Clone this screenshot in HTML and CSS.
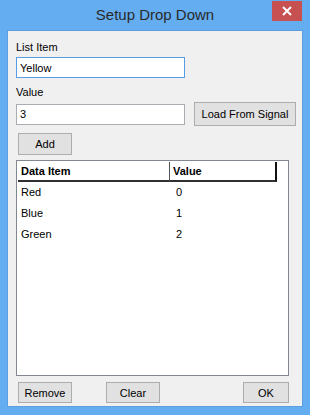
FILE: index.html
```html
<!DOCTYPE html>
<html lang="en">
  <head>
    <meta charset="utf-8" />
    <link rel="stylesheet" href="styles.css">
  </head>

  <body>
    <div class="window">
      <div class="titlebar">
        <span></span>
        <span class="title">Setup Drop Down</span>
        <button class="close">
          <svg width="10" height="10" viewBox="0 0 10 10">
            <path d="M1 1 L9 9 M9 1 L1 9" stroke="#fff" stroke-width="2" />
          </svg>
        </button>
      </div>

      <div class="client">
        <div class="label first">List Item</div>
        <input class="field focused" type="text" value="Yellow" />

        <div class="label">Value</div>
        <div class="value-row">
          <input class="field" type="text" value="3" />
          <button class="btn load">Load From Signal</button>
        </div>

        <button class="btn add">Add</button>

        <div class="listview">
          <div class="head">
            <div class="hcell col1">Data Item</div>
            <div class="hcell col2">Value</div>
          </div>
          <div class="row"><span class="col1">Red</span><span class="col2">0</span></div>
          <div class="row"><span class="col1">Blue</span><span class="col2">1</span></div>
          <div class="row"><span class="col1">Green</span><span class="col2">2</span></div>
        </div>

        <div class="bottom">
          <button class="btn small">Remove</button>
          <button class="btn small clear">Clear</button>
          <button class="btn small ok">OK</button>
        </div>
      </div>
    </div>
  </body>
</html>
```

FILE: styles.css
```css
body {
  margin: 0;
  font-family: "Liberation Sans", Arial, sans-serif;
  font-size: 11px;
  color: #000;
}

.window {
  width: 310px;
  height: 415px;
  background: #64adf1;
  box-sizing: border-box;
  padding: 0 7px 8px 7px;
  display: flex;
  flex-direction: column;
}

.titlebar {
  height: 30px;
  display: grid;
  grid-template-columns: 1fr auto 1fr;
}

.title {
  font-size: 15px;
  color: #2a2a2a;
  line-height: 30px;
}

.close {
  justify-self: end;
  align-self: start;
  width: 30px;
  height: 20px;
  margin: 1px 1px 0 0;
  border: none;
  padding: 0;
  background: #c75050;
  display: flex;
  align-items: center;
  justify-content: center;
}

.client {
  flex: 1;
  background: #f0f0f0;
  border: 1px solid #5b9fe0;
  padding: 0 6px 0 8px;
  display: flex;
  flex-direction: column;
  align-items: flex-start;
}

.label {
  line-height: 14px;
  margin-top: 7px;
  margin-bottom: 3px;
}

.label.first {
  margin-top: 9px;
  margin-bottom: 3px;
}

.field {
  width: 169px;
  height: 21px;
  box-sizing: border-box;
  border: 1px solid #abadb3;
  background: #fff;
  font-family: inherit;
  font-size: 11px;
  padding: 0 3px;
  margin: 0;
}

.field.focused {
  border-color: #569de5;
}

.value-row {
  width: 100%;
  display: flex;
  align-items: center;
  gap: 9px;
}

.btn {
  box-sizing: border-box;
  background: #e1e1e1;
  border: 1px solid #adadad;
  font-family: inherit;
  font-size: 11px;
  color: #000;
  padding: 0;
  margin: 0;
}

.load {
  width: 102px;
  height: 24px;
}

.add {
  width: 54px;
  height: 22px;
  margin: 7px 0 0 2px;
}

.listview {
  margin-top: 5px;
  width: 273px;
  height: 216px;
  box-sizing: border-box;
  background: #fff;
  border: 1px solid #828790;
  padding: 1px 0 0 1px;
}

.head {
  display: flex;
  height: 20px;
}

.hcell {
  box-sizing: border-box;
  font-weight: bold;
  line-height: 18px;
  padding-left: 3px;
  border-bottom: 2px solid #303030;
}

.hcell.col1 {
  width: 152px;
  border-right: 1px solid #555;
}

.hcell.col2 {
  width: 107px;
  border-right: 2px solid #111;
}

.row {
  display: flex;
  height: 21px;
  line-height: 21px;
}

.row .col1 {
  width: 152px;
  padding-left: 3px;
}

.row .col2 {
  padding-left: 3px;
}

.bottom {
  margin-top: 6px;
  margin-left: 2px;
  width: 271px;
  display: flex;
}

.small {
  width: 54px;
  height: 21px;
}

.clear {
  margin-left: 34px;
}

.ok {
  margin-left: auto;
  width: 46px;
}
```
